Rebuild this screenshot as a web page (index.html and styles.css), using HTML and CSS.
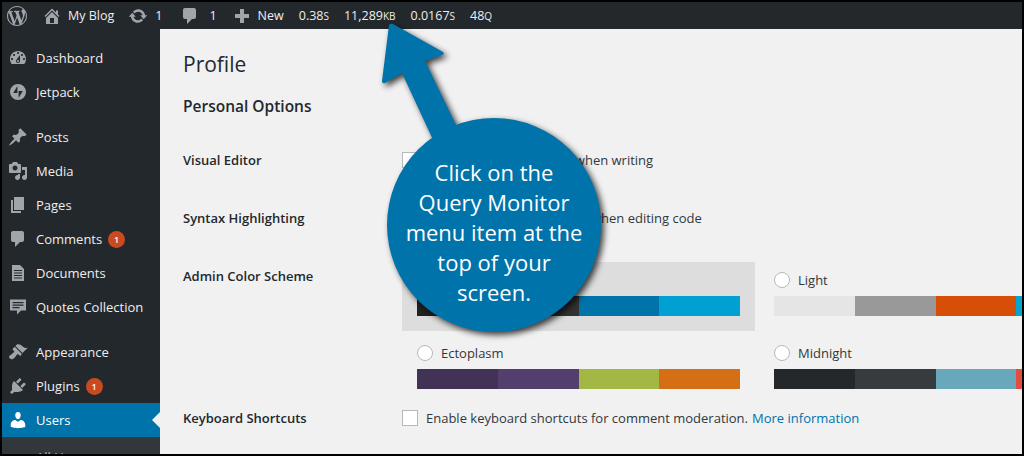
FILE: index.html
```html
<!DOCTYPE html>
<html lang="en">
<head>
<meta charset="utf-8">
<title>Profile</title>
<link rel="stylesheet" href="styles.css">
</head>
<body>
<svg class="defs" width="0" height="0" aria-hidden="true">
  <defs>
    <symbol id="i-wp" viewBox="0 0 20 20"><path fill-rule="evenodd" d="M20 10c0-5.51-4.49-10-10-10C4.48 0 0 4.49 0 10c0 5.52 4.48 10 10 10 5.51 0 10-4.48 10-10zM7.78 15.37L4.37 6.22c.55-.02 1.17-.08 1.17-.08.5-.06.44-1.13-.06-1.11 0 0-1.45.11-2.37.11-.18 0-.37 0-.58-.01C4.12 2.69 6.87 1.11 10 1.11c2.33 0 4.45.87 6.05 2.34-.68-.11-1.65.39-1.65 1.58 0 .74.45 1.36.9 2.1.35.61.55 1.36.55 2.46 0 1.49-1.4 5-1.4 5l-3.03-8.37c.54-.02.82-.17.82-.17.5-.05.44-1.25-.06-1.22 0 0-1.44.12-2.38.12-.87 0-2.33-.12-2.33-.12-.5-.03-.56 1.2-.06 1.22l.92.08 1.26 3.41zM17.41 10c.24-.64.74-1.87.43-4.25.7 1.29 1.05 2.71 1.05 4.25 0 3.29-1.73 6.24-4.4 7.78.97-2.59 1.94-5.2 2.92-7.78zM6.1 18.09C3.12 16.65 1.11 13.53 1.11 10c0-1.3.23-2.48.72-3.59C3.25 10.3 4.67 14.2 6.1 18.09zm4.03-6.63l2.58 6.98c-.86.29-1.76.45-2.71.45-.79 0-1.57-.11-2.29-.33.81-2.38 1.62-4.74 2.42-7.1z"/></symbol>
    <symbol id="i-home" viewBox="0 0 20 20"><path fill-rule="evenodd" d="M16 8.5l1.53 1.53-1.06 1.06L10 4.62l-6.47 6.47-1.06-1.06L10 2.5l4 4v-2h2v4zm-6-2.46l6 5.99V18H4v-6.03zM12 17v-5H8v5h4z"/></symbol>
    <symbol id="i-update" viewBox="0 0 20 20"><path d="M10.2 3.28c3.53 0 6.43 2.61 6.92 6h2.08l-3.5 4-3.5-4h2.32c-.45-1.97-2.21-3.45-4.32-3.45-1.45 0-2.73.71-3.54 1.78L4.95 5.66C6.23 4.2 8.11 3.28 10.2 3.28zm-.4 13.44c-3.52 0-6.43-2.61-6.92-6H.8l3.5-4c1.17 1.33 2.33 2.67 3.5 4H5.48c.45 1.97 2.21 3.45 4.32 3.45 1.45 0 2.73-.71 3.54-1.78l1.71 1.95c-1.28 1.46-3.15 2.38-5.25 2.38z"/></symbol>
    <symbol id="i-comment" viewBox="0 0 20 20"><path d="M5 2h9c1.1 0 2 .9 2 2v7c0 1.1-.9 2-2 2h-2l-5 5v-5H5c-1.1 0-2-.9-2-2V4c0-1.1.9-2 2-2z"/></symbol>
    <symbol id="i-plus" viewBox="0 0 20 20"><path d="M8 3h4v5h5v4h-5v5H8v-5H3V8h5z"/></symbol>
    <symbol id="i-dash" viewBox="0 0 20 20"><path fill-rule="evenodd" d="M3.76 16h12.48c1.1-1.37 1.76-3.11 1.76-5 0-4.42-3.58-8-8-8s-8 3.58-8 8c0 1.89.66 3.63 1.76 5zM10 4c.55 0 1 .45 1 1s-.45 1-1 1-1-.45-1-1 .45-1 1-1zM6 6c.55 0 1 .45 1 1s-.45 1-1 1-1-.45-1-1 .45-1 1-1zm8 0c.55 0 1 .45 1 1s-.45 1-1 1-1-.45-1-1 .45-1 1-1zm-5.37 5.55L12 7v6c0 1.1-.9 2-2 2s-2-.9-2-2c0-.57.24-1.08.63-1.45zM4 10c.55 0 1 .45 1 1s-.45 1-1 1-1-.45-1-1 .45-1 1-1zm12 0c.55 0 1 .45 1 1s-.45 1-1 1-1-.45-1-1 .45-1 1-1zm-5 3c0-.55-.45-1-1-1s-1 .45-1 1 .45 1 1 1 1-.45 1-1z"/></symbol>
    <symbol id="i-jetpack" viewBox="0 0 20 20"><path fill-rule="evenodd" d="M10 2a8 8 0 1 0 0 16 8 8 0 0 0 0-16zM9.4 4v7H5.2zM10.6 16V9h4.2z"/></symbol>
    <symbol id="i-pin" viewBox="0 0 20 20"><path d="M10.44 3.02l1.82-1.82 6.36 6.35-1.83 1.82c-1.05-.68-2.48-.57-3.41.36l-.75.75c-.92.93-1.04 2.35-.35 3.41l-1.83 1.82-2.41-2.41-2.8 2.79c-.42.42-3.38 2.71-3.8 2.29s1.86-3.39 2.28-3.81l2.79-2.79L4.1 9.36l1.83-1.82c1.05.69 2.48.57 3.4-.36l.75-.75c.93-.92 1.05-2.35.36-3.41z"/></symbol>
    <symbol id="i-media" viewBox="0 0 20 20"><path fill-rule="evenodd" d="M13 11V4c0-.55-.45-1-1-1h-1.67L9 1H5L3.67 3H2c-.55 0-1 .45-1 1v7c0 .55.45 1 1 1h10c.55 0 1-.45 1-1zM7 4.5c1.38 0 2.5 1.12 2.5 2.5S8.38 9.5 7 9.5 4.5 8.38 4.5 7 5.62 4.5 7 4.5zM14 6h5v10.5c0 1.38-1.12 2.5-2.5 2.5S14 17.88 14 16.5s1.12-2.5 2.5-2.5c.17 0 .34.02.5.05V9h-3V6zm-4 8.05V13h2v3.5c0 1.38-1.12 2.5-2.5 2.5S7 17.88 7 16.5 8.12 14 9.5 14c.17 0 .34.02.5.05z"/></symbol>
    <symbol id="i-pages" viewBox="0 0 20 20"><path d="M6 15V2h10v13H6zm-1 1h8v2H3V5h2v11z"/></symbol>
    <symbol id="i-doc" viewBox="0 0 20 20"><path fill-rule="evenodd" d="M4 2h8l4 4v12H4zM6 7v1h8V7zM6 9.500v1h8v-1zM6 12v1h8v-1zM6 14.500v1h8v-1z"/></symbol>
    <symbol id="i-quote" viewBox="0 0 20 20"><path fill-rule="evenodd" d="M2 2.500h16v11h-5l-4 4v-4H2zM4.500 5v1.200h11V5zM4.500 7.500v1.200h11V7.500zM4.500 10v1.200h7V10z"/></symbol>
    <symbol id="i-brush" viewBox="0 0 20 20"><path d="M14.48 11.06L7.41 3.99l1.5-1.5c.5-.56 2.3-.47 3.51.32 1.21.8 1.43 1.28 2.91 2.1 1.18.64 2.45 1.26 4.45.85zm-.71.71L6.7 4.7 4.93 6.47c-.39.39-.39 1.02 0 1.41l1.06 1.06c.39.39.39 1.03 0 1.42-.6.6-1.43 1.11-2.21 1.69-.35.26-.7.53-1.01.84C1.43 13.23.4 14.89 1.98 16.47c1.57 1.58 3.24.55 4.58-.79.32-.31.58-.66.85-1.01.58-.78 1.09-1.61 1.69-2.21.39-.39 1.02-.39 1.41 0l1.06 1.06c.39.39 1.02.39 1.41 0z"/></symbol>
    <symbol id="i-plug" viewBox="0 0 20 20"><path d="M13.11 4.36L9.87 7.6 8 5.73l3.24-3.24c.35-.34 1.05-.2 1.56.32.52.51.66 1.21.31 1.55zm-8 1.77l.91-1.12 9.01 9.01-1.19.84c-.71.71-2.63 1.16-3.82 1.16H6.14L4.9 17.26c-.59.59-1.54.59-2.12 0-.59-.58-.59-1.53 0-2.12l1.24-1.24v-3.88c0-1.13.4-3.19 1.09-3.89zm7.26 3.97l3.24-3.24c.34-.35 1.04-.21 1.55.31.52.51.66 1.21.31 1.55l-3.24 3.25z"/></symbol>
    <symbol id="i-user" viewBox="0 0 20 20"><path d="M10 9.25c-2.27 0-2.73-3.44-2.73-3.44C7 4.02 7.82 2 9.97 2c2.16 0 2.98 2.02 2.71 3.81 0 0-.41 3.44-2.68 3.44zm0 2.57L12.72 10c2.39 0 4.52 2.33 4.52 4.53v2.49s-3.65 1.13-7.24 1.13c-3.65 0-7.24-1.13-7.24-1.13v-2.49c0-2.25 1.94-4.48 4.47-4.48z"/></symbol>
  </defs>
</svg>

<div class="frame">
  <header class="adminbar">
    <svg class="bar-wp"><use href="#i-wp"/></svg>
    <a class="bar-item home"><svg class="bar-icon"><use href="#i-home"/></svg>My Blog</a>
    <a class="bar-item updates"><svg class="bar-icon"><use href="#i-update"/></svg>1</a>
    <a class="bar-item comments"><svg class="bar-icon"><use href="#i-comment"/></svg>1</a>
    <a class="bar-item new"><svg class="bar-icon"><use href="#i-plus"/></svg>New</a>
    <a class="bar-item qm">0.38<small>S</small></a>
    <a class="bar-item qm">11,289<small>KB</small></a>
    <a class="bar-item qm">0.0167<small>S</small></a>
    <a class="bar-item qm">48<small>Q</small></a>
  </header>

  <div class="body-row">
    <nav class="sidebar">
      <a class="menu-item"><svg class="menu-icon"><use href="#i-dash"/></svg>Dashboard</a>
      <a class="menu-item"><svg class="menu-icon"><use href="#i-jetpack"/></svg>Jetpack</a>
      <div class="menu-sep"></div>
      <a class="menu-item"><svg class="menu-icon"><use href="#i-pin"/></svg>Posts</a>
      <a class="menu-item"><svg class="menu-icon"><use href="#i-media"/></svg>Media</a>
      <a class="menu-item"><svg class="menu-icon"><use href="#i-pages"/></svg>Pages</a>
      <a class="menu-item"><svg class="menu-icon"><use href="#i-comment"/></svg>Comments<span class="badge">1</span></a>
      <a class="menu-item"><svg class="menu-icon"><use href="#i-doc"/></svg>Documents</a>
      <a class="menu-item"><svg class="menu-icon"><use href="#i-quote"/></svg>Quotes Collection</a>
      <div class="menu-sep"></div>
      <a class="menu-item"><svg class="menu-icon"><use href="#i-brush"/></svg>Appearance</a>
      <a class="menu-item"><svg class="menu-icon"><use href="#i-plug"/></svg>Plugins<span class="badge">1</span></a>
      <a class="menu-item current"><svg class="menu-icon"><use href="#i-user"/></svg>Users</a>
      <div class="submenu"><a class="sub-item">All Users</a></div>
    </nav>

    <main class="content">
      <h1 class="page-title">Profile</h1>
      <h2 class="section-title">Personal Options</h2>

      <div class="field field-visual">
        <div class="field-label">Visual Editor</div>
        <label class="check"><span class="checkbox"></span>Disable the visual editor when writing</label>
      </div>
      <div class="field field-syntax">
        <div class="field-label">Syntax Highlighting</div>
        <label class="check"><span class="checkbox"></span>Disable syntax highlighting when editing code</label>
      </div>
      <div class="field field-scheme">
        <div class="field-label">Admin Color Scheme</div>
        <div class="schemes">
          <div class="scheme selected">
            <label class="radio"><span class="radio-dot"></span>Default</label>
            <div class="palette"><i class="c1"></i><i class="c2"></i><i class="c3"></i><i class="c4"></i></div>
          </div>
          <div class="scheme">
            <label class="radio"><span class="radio-dot"></span>Light</label>
            <div class="palette"><i class="l1"></i><i class="l2"></i><i class="l3"></i><i class="l4"></i></div>
          </div>
          <div class="scheme">
            <label class="radio"><span class="radio-dot"></span>Ectoplasm</label>
            <div class="palette"><i class="e1"></i><i class="e2"></i><i class="e3"></i><i class="e4"></i></div>
          </div>
          <div class="scheme">
            <label class="radio"><span class="radio-dot"></span>Midnight</label>
            <div class="palette"><i class="m1"></i><i class="m2"></i><i class="m3"></i><i class="m4"></i></div>
          </div>
        </div>
      </div>
      <div class="field field-keys">
        <div class="field-label">Keyboard Shortcuts</div>
        <label class="check"><span class="checkbox"></span>Enable keyboard shortcuts for comment moderation. <a class="link">More information</a></label>
      </div>
    </main>
  </div>

  <div class="callout">
    <svg class="callout-art" width="240" height="340" viewBox="0 0 240 340" aria-hidden="true">
      <path fill="#0073aa" d="M7 23 Q9 21 11 22 L61 50 Q63 52 60 53 L43 59 L75 125 L52 140 L20 71 L3 81 Q0 82 0 79 Z" transform="translate(0 0)"/>
      <circle cx="112" cy="223" r="107" fill="#0073aa"/>
    </svg>
    <p class="callout-text">Click on the Query Monitor menu item at the top of your screen.</p>
  </div>
</div>
</body>
</html>
```
FILE: styles.css
```css
* { box-sizing: border-box; }
html, body { margin: 0; height: 100%; }
body {
  background: #000;
  padding: 2px;
  overflow: hidden;
  font-family: "Open Sans", "Noto Sans", sans-serif;
  font-size: 13px;
  color: #32373c;
}
.defs { position: absolute; }
svg { fill: currentColor; display: block; flex: none; }

.frame {
  position: relative;
  height: 452px;
  width: 1020px;
  overflow: hidden;
  background: #f1f1f1;
  display: flex;
  flex-direction: column;
}

/* admin bar */
.adminbar {
  height: 27px;
  flex: none;
  background: #23282d;
  color: #eee;
  display: flex;
  align-items: center;
  font-size: 12.5px;
}
.bar-wp { width: 20px; height: 20px; margin-left: 5px; margin-top: 1px; color: #a0a5aa; }
.bar-item { display: flex; align-items: center; white-space: nowrap; }
.bar-icon { width: 20px; height: 20px; color: #a0a5aa; margin-right: 6px; }
.home { margin-left: 15px; }
.updates { margin-left: 14px; }
.updates .bar-icon { margin-right: 7px; }
.comments { margin-left: 18px; }
.comments .bar-icon { margin-right: 9px; }
.new { margin-left: 15px; }
.new .bar-icon { margin-right: 6px; }
.qm { margin-left: 15px; }
.qm small { font-size: 10px; }

/* sidebar */
.body-row { flex: 1; display: flex; min-height: 0; }
.sidebar {
  width: 158px;
  flex: none;
  background: #23282d;
  color: #eee;
  padding-top: 12px;
  display: flex;
  flex-direction: column;
  font-size: 13px;
}
.menu-item {
  height: 34px;
  flex: none;
  display: flex;
  align-items: center;
  position: relative;
}
.menu-icon { width: 20px; height: 20px; margin: 0 8px 0 6px; color: #a0a5aa; }
.menu-sep { height: 11px; flex: none; }
.current { background: #0073aa; color: #fff; }
.current .menu-icon { color: #fff; }
.current::after {
  content: "";
  position: absolute;
  right: 0;
  top: 9px;
  border: 8px solid transparent;
  border-left: 0;
  border-right-color: #f1f1f1;
}
.badge {
  width: 17px;
  height: 17px;
  margin-left: 6px;
  border-radius: 50%;
  background: #ca4a1f;
  color: #fff;
  font-size: 9px;
  font-weight: 600;
  display: flex;
  align-items: center;
  justify-content: center;
}
.submenu { background: #32373c; flex: 1; padding: 11px 0 0 34px; color: #b4b9be; }

/* content */
.content { flex: 1; min-width: 0; padding: 0 0 0 23px; }
.page-title { margin: 19px 0 0; font-size: 21px; line-height: 32px; font-weight: 400; color: #23282d; }
.section-title { margin: 14px 0 0; font-size: 15.500px; line-height: 24px; font-weight: 600; color: #23282d; }
.field { display: flex; align-items: flex-start; }
.field-label { width: 219px; flex: none; font-weight: 600; color: #23282d; line-height: 20px; }
.field-visual { margin-top: 32px; }
.field-syntax { margin-top: 38px; }
.field-scheme { margin-top: 38px; }
.field-keys { margin-top: 0; }
.check { display: flex; align-items: center; white-space: nowrap; line-height: 20px; }
.checkbox { width: 16px; height: 16px; margin-right: 8px; background: #fff; border: 1px solid #b4b9be; flex: none; }
.link { color: #0073aa; margin-left: 4px; }

.schemes { display: grid; grid-template-columns: 353px 353px; margin-top: -4px; }
.scheme { padding: 8px 15px 15px; height: 73px; }
.scheme.selected { background: #ddd; height: 69px; margin-bottom: 4px; }
.radio { display: flex; align-items: center; height: 20px; line-height: 20px; margin-bottom: 6px; }
.radio-dot { width: 16px; height: 16px; margin-right: 8px; border-radius: 50%; background: #fff; border: 1px solid #b4b9be; flex: none; }
.scheme:nth-child(even) { padding-left: 19px; }
.palette { display: flex; width: 323px; height: 20px; }
.palette i { flex: 1 1 0; }
.c1 { background: #222; } .c2 { background: #333; } .c3 { background: #0073aa; } .c4 { background: #00a0d2; }
.l1 { background: #e5e5e5; } .l2 { background: #999; } .l3 { background: #d64e07; } .l4 { background: #04a4cc; }
.e1 { background: #413256; } .e2 { background: #523f6d; } .e3 { background: #a3b745; } .e4 { background: #d46f15; }
.m1 { background: #25282b; } .m2 { background: #363b3f; } .m3 { background: #69a8bb; } .m4 { background: #e14d43; }

/* callout drawn over the page */
.callout { position: absolute; left: 380px; top: 0; width: 240px; height: 340px; pointer-events: none; }
.callout-art { filter: drop-shadow(3px 3px 3px rgba(0,0,0,.75)); }
.callout-text {
  position: absolute;
  left: 22px;
  top: 155px;
  width: 180px;
  margin: 0;
  text-align: center;
  color: #fff;
  font-family: "Open Sans", sans-serif;
  font-size: 22px;
  line-height: 30px;
}
```
